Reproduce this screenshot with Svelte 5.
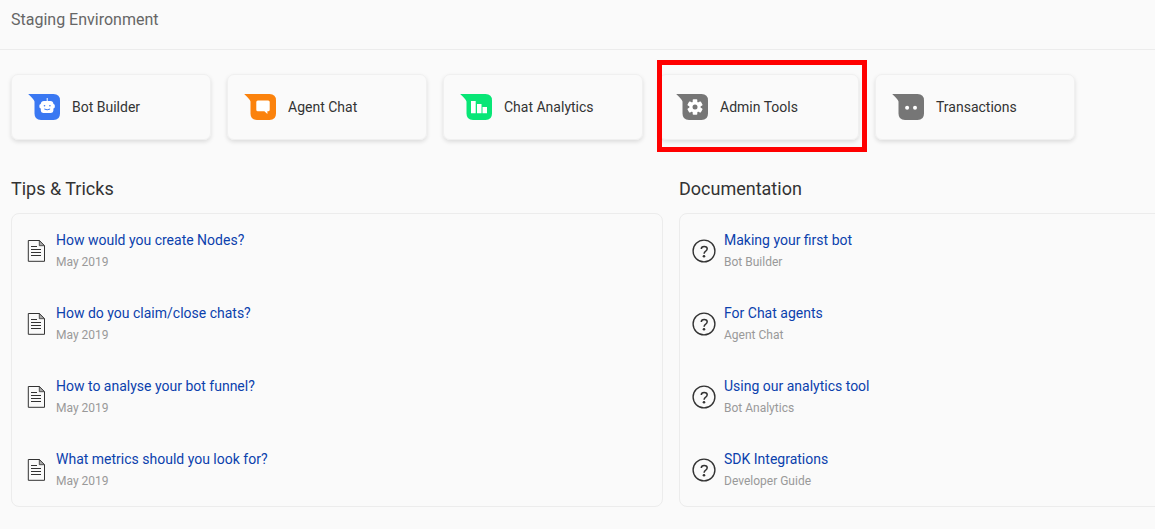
<script>
  const tools = [
    { name: 'Bot Builder', color: '#3a78f2', icon: 'bot' },
    { name: 'Agent Chat', color: '#fb820c', icon: 'chat' },
    { name: 'Chat Analytics', color: '#08e676', icon: 'bars' },
    { name: 'Admin Tools', color: '#767676', icon: 'gear', marked: true },
    { name: 'Transactions', color: '#767676', icon: 'dots' }
  ];
  const sections = [
    {
      title: 'Tips & Tricks',
      icon: 'doc',
      items: [
        ['How would you create Nodes?', 'May 2019'],
        ['How do you claim/close chats?', 'May 2019'],
        ['How to analyse your bot funnel?', 'May 2019'],
        ['What metrics should you look for?', 'May 2019']
      ]
    },
    {
      title: 'Documentation',
      icon: 'help',
      items: [
        ['Making your first bot', 'Bot Builder'],
        ['For Chat agents', 'Agent Chat'],
        ['Using our analytics tool', 'Bot Analytics'],
        ['SDK Integrations', 'Developer Guide']
      ]
    }
  ];
</script>

<main>
  <header>Staging Environment</header>

  <nav>
    {#each tools as tool}
      <div class="card">
        <svg width="32" height="26" viewBox="0 0 32 26">
          <path fill={tool.color} d="M0.200 0H25.500Q32 0 32 6.500V19.500Q32 26 25.500 26H13Q6.500 26 6.500 19.500V7.500Q6 5.500 0.200 0Z" />
          {#if tool.icon === 'bot'}
            <path fill="#fff" d="M18.700 4h1v3h2.800q2.600 0 3 2.900 1.300.3 1.300 1.600v1.500q0 1.400-1.400 1.600v2q0 2.400-2.400 2.400h-7.800q-2.400 0-2.400-2.400v-2q-1.400-.2-1.400-1.600v-1.500q0-1.300 1.300-1.600Q13.100 7 15.900 7h2.800Z" />
            <circle cx="16.500" cy="11.700" r=".8" fill={tool.color} />
            <circle cx="21.900" cy="11.700" r=".8" fill={tool.color} />
            <path d="M16.300 15q2.900 1.600 5.800 0" fill="none" stroke={tool.color} />
          {:else if tool.icon === 'chat'}
            <path fill="#fff" d="M13.800 6.500H24.200Q25.700 6.500 25.700 8V15.700Q25.700 17.200 24.200 17.200H23.400V20L20.400 17.200H13.800Q12.300 17.200 12.300 15.700V8Q12.300 6.500 13.800 6.500Z" />
          {:else if tool.icon === 'bars'}
            <path fill="#fff" d="M11 7h4.700v12.200H11ZM17 10h4.500v9.200H17ZM22.500 13H27v6.200h-4.500Z" />
          {:else if tool.icon === 'gear'}
            <g transform="translate(19 13)">
              {#each [0, 60, 120] as angle}
                <rect x="-2.300" y="-7.700" width="4.600" height="15.400" rx=".8" fill="#fff" transform="rotate({angle})" />
              {/each}
              <circle r="5.600" fill="#fff" />
              <circle r="2.500" fill={tool.color} />
            </g>
          {:else}
            <circle cx="15.100" cy="13.800" r="2" fill="#fff" />
            <circle cx="23" cy="13.800" r="2" fill="#fff" />
          {/if}
        </svg>
        <span>{tool.name}</span>
        {#if tool.marked}<i class="mark"></i>{/if}
      </div>
    {/each}
  </nav>

  <div class="sections">
    {#each sections as section}
      <section>
        <h2>{section.title}</h2>
        <ul>
          {#each section.items as [title, detail]}
            <li>
              {#if section.icon === 'doc'}
                <svg width="24" height="24" viewBox="0 0 24 24" fill="none" stroke="#333">
                  <path d="M4.300 1.500H15.300L20.500 6.700V22.300H4.300Z" />
                  <path d="M15.300 1.500V6.700H20.500Z" fill="#aaa" stroke-width=".8" />
                  <path d="M7 7.500H13M7 10.500H17M7 13.500H17M7 16.500H17" />
                </svg>
              {:else}
                <svg width="24" height="24" viewBox="0 0 24 24" fill="none" stroke="#333">
                  <circle cx="12" cy="12" r="10.900" stroke-width="1.400" />
                  <path d="M9.300 9.900Q9.300 7.400 12.200 7.400Q15.200 7.400 15.200 9.700Q15.200 11 13.700 12.100Q12.100 13.200 12.100 14.700" stroke-width="1.500" />
                  <circle cx="12" cy="17.200" r="1.300" fill="#333" stroke="none" />
                </svg>
              {/if}
              <div class="copy">
                <a href="#top">{title}</a>
                <small>{detail}</small>
              </div>
            </li>
          {/each}
        </ul>
      </section>
    {/each}
  </div>
</main>

<style>
  :global(body) {
    margin: 0;
    background: #fafafa;
    overflow: hidden;
  }
  main {
    height: 529px;
    overflow: hidden;
    font-family: Roboto, sans-serif;
    color: #333;
  }
  header {
    height: 49px;
    padding-left: 11px;
    border-bottom: 1px solid #ececec;
    font-size: 16px;
    line-height: 39px;
    color: #666;
  }
  nav {
    display: flex;
    gap: 16px;
    padding: 24px 0 0 11px;
  }
  .card {
    position: relative;
    box-sizing: border-box;
    width: 200px;
    height: 66px;
    flex: none;
    display: flex;
    align-items: center;
    gap: 12px;
    padding-left: 16px;
    border: 1px solid #f0f0f0;
    border-radius: 7px;
    box-shadow: 0 2px 4px rgba(0, 0, 0, 0.12);
    font-size: 14px;
  }
  .mark {
    position: absolute;
    top: -15px;
    left: -3px;
    width: 200px;
    height: 82px;
    border: 5px solid #f00;
  }
  .sections {
    display: flex;
    gap: 16px;
    padding: 35px 0 0 11px;
  }
  section {
    width: 652px;
    flex: none;
  }
  h2 {
    margin: 0 0 11px;
    font-size: 18px;
    font-weight: 400;
    line-height: 27px;
  }
  ul {
    box-sizing: border-box;
    height: 294px;
    margin: 0;
    padding: 0 0 0 12px;
    border: 1px solid #ececec;
    border-radius: 8px;
    list-style: none;
  }
  li {
    display: flex;
    align-items: center;
    gap: 8px;
    height: 73px;
  }
  .copy {
    display: flex;
    flex-direction: column;
    gap: 2px;
  }
  a {
    font-size: 14px;
    line-height: 22px;
    color: #0b41ad;
    text-decoration: none;
  }
  small {
    font-size: 12px;
    line-height: 18px;
    padding-bottom: 1px;
    color: #999;
  }
</style>
